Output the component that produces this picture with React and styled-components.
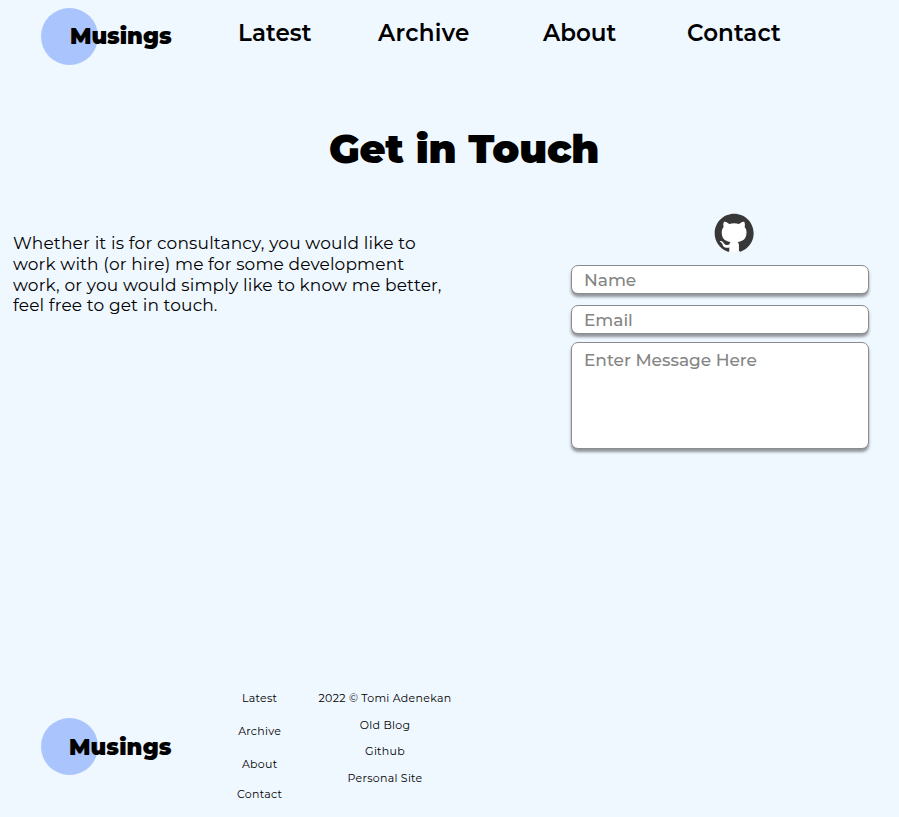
import React from "react";
import styled, { createGlobalStyle } from "styled-components";

const GlobalStyle = createGlobalStyle`
  * { box-sizing: border-box; }
  body {
    margin: 0;
    background: #eff7ff;
    color: #000;
    font-family: Montserrat, Inter, sans-serif;
  }
`;

const Page = styled.div`
  width: 899px;
  height: 817px;
  display: flex;
  flex-direction: column;
  overflow: hidden;
`;

const Header = styled.header`
  display: flex;
  height: 119px;
  padding: 8px 0 0 41px;
`;

const Logo = styled.a`
  position: relative;
  display: block;
  flex: none;
  width: 197px;
  height: 57px;
  padding: ${(p) => p.$top}px 0 0 ${(p) => p.$inset}px;
  font-size: 22.5px;
  font-weight: 900;
  line-height: 28px;
  letter-spacing: ${(p) => p.$spacing}px;
  &::before {
    content: "";
    position: absolute;
    z-index: -1;
    left: 0;
    top: 0;
    width: 57px;
    height: 57px;
    border-radius: 50%;
    background: #aac5fd;
  }
`;

const Nav = styled.nav`
  display: grid;
  grid-template-columns: 140px 165px 144px 120px;
  padding-top: 11px;
`;

const NavLink = styled.a`
  font-size: 23px;
  font-weight: 600;
  line-height: 28px;
  letter-spacing: ${(p) => p.$spacing}px;
`;

const Title = styled.h1`
  margin: 0 0 0 329px;
  height: 94px;
  font-size: 40px;
  font-weight: 900;
  line-height: 60px;
  letter-spacing: -0.15px;
  white-space: nowrap;
`;

const Main = styled.main`
  display: grid;
  grid-template-columns: 571px 298px;
  height: 470px;
`;

const Intro = styled.p`
  margin: 0;
  padding: 20px 0 0 13px;
  font-size: 17px;
  line-height: 20.8px;
`;

const Line = styled.span`
  display: block;
  white-space: nowrap;
  letter-spacing: ${(p) => p.$spacing}px;
`;

const Form = styled.form`
  display: flex;
  flex-direction: column;
`;

const GithubLink = styled.a`
  display: block;
  width: 40px;
  height: 39px;
  margin: 0 0 13px 143px;
  svg { display: block; }
`;

const fieldStyles = `
  display: block;
  width: 298px;
  border: 1px solid #8b8b8b;
  border-radius: 7px;
  background: #fff;
  box-shadow: 0 3px 3px rgba(0, 0, 0, 0.4);
  font-family: Montserrat, Inter, sans-serif;
  font-size: 17px;
  font-weight: 500;
  line-height: 20px;
  letter-spacing: -0.04px;
  outline: none;
  resize: none;
  &::placeholder { color: #858585; opacity: 1; }
`;

const Field = styled.input`
  ${fieldStyles}
  height: ${(p) => p.$height}px;
  margin-bottom: ${(p) => p.$gap}px;
  padding: 1px 12px 0;
`;

const Message = styled.textarea`
  ${fieldStyles}
  height: 107px;
  padding: 7px 12px;
`;

const Footer = styled.footer`
  display: flex;
  padding: 9px 0 0 41px;
`;

const FooterLogo = styled.div`
  padding-top: 26px;
`;

const FooterColumn = styled.div`
  display: grid;
  justify-items: center;
  align-content: start;
  width: ${(p) => p.$width}px;
  margin-left: ${(p) => p.$left}px;
  grid-template-rows: ${(p) => p.$rows};
`;

const FooterLink = styled.a`
  font-size: 11px;
  line-height: 12px;
  white-space: nowrap;
  letter-spacing: 0.28px;
`;

const GithubMark = () => (
  <svg width="40" height="39" viewBox="-0.4 -0.2 24.6 24">
    <circle cx="12" cy="12" r="11.5" fill="#fff" />
    <path
      fill="#383838"
      d="M12 .297c-6.63 0-12 5.373-12 12 0 5.303 3.438 9.8 8.205 11.385.6.113.82-.258.82-.577 0-.285-.01-1.04-.015-2.04-3.338.724-4.042-1.61-4.042-1.61C4.422 18.07 3.633 17.7 3.633 17.7c-1.087-.744.084-.729.084-.729 1.205.084 1.838 1.236 1.838 1.236 1.07 1.835 2.809 1.305 3.495.998.108-.776.417-1.305.76-1.605-2.665-.3-5.466-1.332-5.466-5.93 0-1.31.465-2.38 1.235-3.22-.135-.303-.54-1.523.105-3.176 0 0 1.005-.322 3.3 1.23.96-.267 1.98-.399 3-.405 1.02.006 2.04.138 3 .405 2.28-1.552 3.285-1.23 3.285-1.23.645 1.653.24 2.873.12 3.176.765.84 1.23 1.91 1.23 3.22 0 4.61-2.805 5.625-5.475 5.92.42.36.81 1.096.81 2.22 0 1.606-.015 2.896-.015 3.286 0 .315.21.69.825.57C20.565 22.092 24 17.592 24 12.297c0-6.627-5.373-12-12-12"
    />
  </svg>
);

const navLinks = [
  ["Latest", 0.1],
  ["Archive", 0.3],
  ["About", 0],
  ["Contact", 0.1],
];

const introLines = [
  ["Whether it is for consultancy, you would like to", 0.17],
  ["work with (or hire) me for some development", 0.13],
  ["work, or you would simply like to know me better,", 0.16],
  ["feel free to get in touch.", 0.13],
];

const siteLinks = ["Latest", "Archive", "About", "Contact"];

const aboutLinks = ["2022 © Tomi Adenekan", "Old Blog", "Github", "Personal Site"];

export default function App() {
  return (
    <Page>
      <GlobalStyle />
      <Header>
        <Logo $top={14} $inset={29} $spacing={-0.05}>Musings</Logo>
        <Nav>
          {navLinks.map(([label, spacing]) => (
            <NavLink key={label} $spacing={spacing}>{label}</NavLink>
          ))}
        </Nav>
      </Header>
      <Title>Get in Touch</Title>
      <Main>
        <Intro>
          {introLines.map(([text, spacing]) => (
            <Line key={text} $spacing={spacing}>{text}</Line>
          ))}
        </Intro>
        <Form>
          <GithubLink aria-label="Github"><GithubMark /></GithubLink>
          <Field placeholder="Name" $height={29.4} $gap={10.4} />
          <Field placeholder="Email" $height={29.4} $gap={7.8} />
          <Message placeholder="Enter Message Here" />
        </Form>
      </Main>
      <Footer>
        <FooterLogo>
          <Logo $top={15} $inset={28} $spacing={0.1}>Musings</Logo>
        </FooterLogo>
        <FooterColumn $width={44} $left={-1} $rows="33px 33px 30px 12px">
          {siteLinks.map((label) => (
            <FooterLink key={label}>{label}</FooterLink>
          ))}
        </FooterColumn>
        <FooterColumn $width={134} $left={37} $rows="27px 26px 27px 12px">
          {aboutLinks.map((label) => (
            <FooterLink key={label}>{label}</FooterLink>
          ))}
        </FooterColumn>
      </Footer>
    </Page>
  );
}
